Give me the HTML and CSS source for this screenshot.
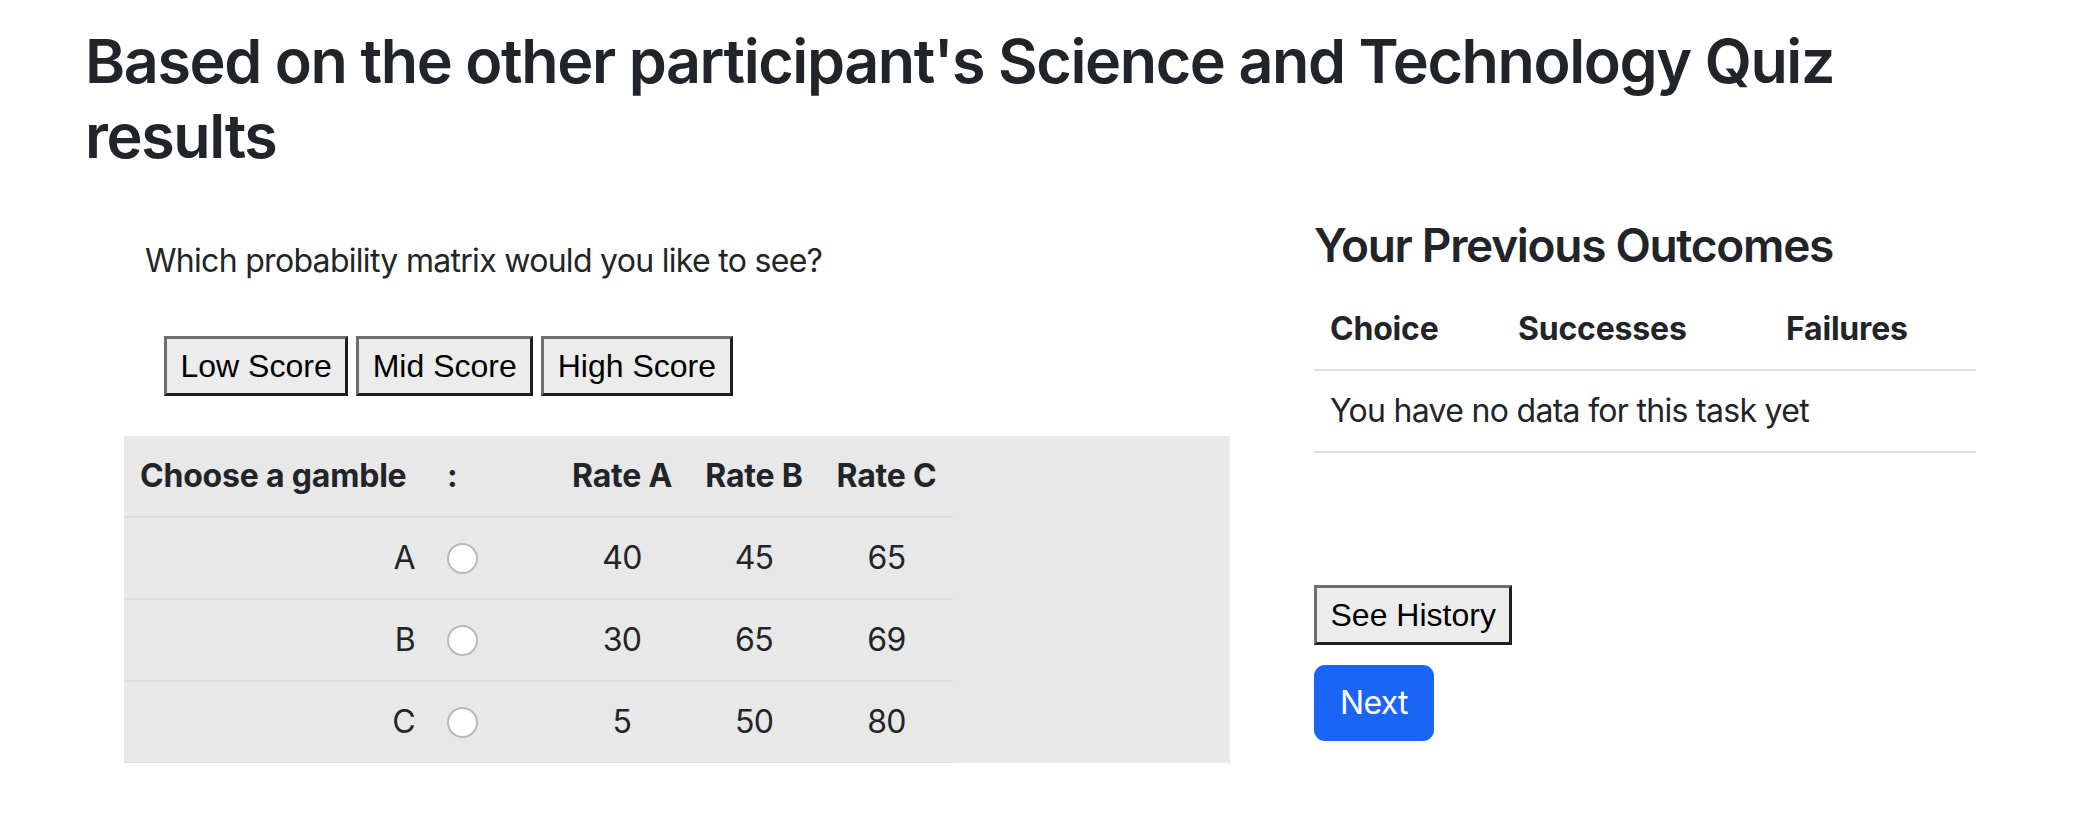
FILE: index.html
```html
<!DOCTYPE html>
<html lang="en">
<head>
<meta charset="utf-8">
<title>Science and Technology Quiz</title>
<link rel="stylesheet" href="styles.css">
</head>
<body>
<main class="page">
  <h2 class="title">Based on the other participant's Science and Technology Quiz results</h2>
  <div class="row">
    <section class="left">
      <p class="question">Which probability matrix would you like to see?</p>
      <div class="score-buttons">
        <button class="native-btn" type="button">Low Score</button>
        <button class="native-btn" type="button">Mid Score</button>
        <button class="native-btn" type="button">High Score</button>
      </div>
      <div class="matrix-box">
        <table class="matrix">
          <colgroup>
            <col class="w-label">
            <col class="w-radio">
            <col class="w-rate">
            <col class="w-rate">
            <col class="w-rate-last">
          </colgroup>
          <thead>
            <tr>
              <th class="label-head">Choose a gamble</th>
              <th class="colon">:</th>
              <th class="num">Rate A</th>
              <th class="num">Rate B</th>
              <th class="num">Rate C</th>
            </tr>
          </thead>
          <tbody>
            <tr>
              <td class="opt">A</td>
              <td class="radio-cell"><input class="radio" type="radio" name="gamble" aria-label="A"></td>
              <td class="num">40</td>
              <td class="num">45</td>
              <td class="num">65</td>
            </tr>
            <tr>
              <td class="opt">B</td>
              <td class="radio-cell"><input class="radio" type="radio" name="gamble" aria-label="B"></td>
              <td class="num">30</td>
              <td class="num">65</td>
              <td class="num">69</td>
            </tr>
            <tr>
              <td class="opt">C</td>
              <td class="radio-cell"><input class="radio" type="radio" name="gamble" aria-label="C"></td>
              <td class="num">5</td>
              <td class="num">50</td>
              <td class="num">80</td>
            </tr>
          </tbody>
        </table>
      </div>
    </section>
    <section class="right">
      <h4 class="outcomes-title">Your Previous Outcomes</h4>
      <table class="outcomes">
        <colgroup>
          <col class="w-choice">
          <col class="w-succ">
          <col class="w-fail">
        </colgroup>
        <thead>
          <tr>
            <th>Choice</th>
            <th>Successes</th>
            <th>Failures</th>
          </tr>
        </thead>
        <tbody>
          <tr>
            <td colspan="3">You have no data for this task yet</td>
          </tr>
        </tbody>
      </table>
      <button class="native-btn history-btn" type="button">See History</button>
      <button class="next-btn" type="button">Next</button>
    </section>
  </div>
</main>
</body>
</html>
```
FILE: styles.css
```css
* {
  box-sizing: border-box;
}

body {
  margin: 0;
  background: #ffffff;
  color: #212529;
  font-family: Inter, "Noto Sans", sans-serif;
  font-size: 32px;
  line-height: 48px;
  letter-spacing: -0.7px;
}

.page {
  padding: 24px 98px 0 85px;
}

.title {
  margin: 0;
  font-size: 61px;
  font-weight: 600;
  line-height: 75px;
  letter-spacing: -1.4px;
}

.row {
  display: flex;
  align-items: flex-start;
  margin-top: 43px;
}

.left {
  width: 1106px;
  margin-left: 39px;
  padding-top: 20px;
}

.question {
  margin: 0 0 0 21px;
}

.score-buttons {
  display: flex;
  gap: 8px;
  margin: 51px 0 0 40px;
}

.native-btn {
  font-family: "Liberation Sans", Arial, sans-serif;
  font-size: 32px;
  line-height: 48px;
  letter-spacing: 0;
  padding: 3px 13.5px;
  border: 3px solid;
  border-color: #6e6e6e #1f1f1f #1f1f1f #6e6e6e;
  border-radius: 0;
  background: #ececec;
  color: #000000;
}

.matrix-box {
  margin-top: 40px;
  height: 327px;
  background: #e8e8e8;
}

.matrix {
  border-collapse: collapse;
  table-layout: fixed;
  width: 829px;
}

.w-label { width: 307px; }
.w-radio { width: 125px; }
.w-rate { width: 132px; }
.w-rate-last { width: 133px; }

.matrix th,
.matrix td {
  padding: 16px;
  line-height: 48px;
  border-bottom: 2px solid #dadee3;
  vertical-align: middle;
  white-space: nowrap;
}

.matrix th {
  font-weight: 700;
  text-align: left;
  letter-spacing: -0.2px;
}

.matrix .num {
  text-align: center;
}

.matrix .opt {
  text-align: right;
}

.radio-cell {
  line-height: 0;
}

.radio {
  -webkit-appearance: none;
  appearance: none;
  display: block;
  width: 31px;
  height: 31px;
  margin: 0;
  border: 2px solid #b9b9b9;
  border-radius: 50%;
  background: #ffffff;
}

.right {
  width: 662px;
  margin-left: 84px;
  display: flex;
  flex-direction: column;
  align-items: flex-start;
}

.outcomes-title {
  margin: 0 0 16px;
  font-size: 46px;
  font-weight: 600;
  line-height: 56px;
  letter-spacing: -1.3px;
}

.outcomes {
  width: 662px;
  border-collapse: collapse;
  table-layout: fixed;
}

.w-choice { width: 188px; }
.w-succ { width: 268px; }
.w-fail { width: 206px; }

.outcomes th,
.outcomes td {
  padding: 16px;
  line-height: 48px;
  border-bottom: 2px solid #dee2e6;
  text-align: left;
  white-space: nowrap;
}

.outcomes th {
  font-weight: 700;
  letter-spacing: -0.2px;
}

.history-btn {
  margin-top: 132px;
}

.next-btn {
  margin-top: 20px;
  font-family: Inter, "Noto Sans", sans-serif;
  font-size: 32px;
  line-height: 48px;
  letter-spacing: -0.7px;
  padding: 12px 24px;
  border: 2px solid #1a64f6;
  border-radius: 11px;
  background: #1a64f6;
  color: #ffffff;
}
```
